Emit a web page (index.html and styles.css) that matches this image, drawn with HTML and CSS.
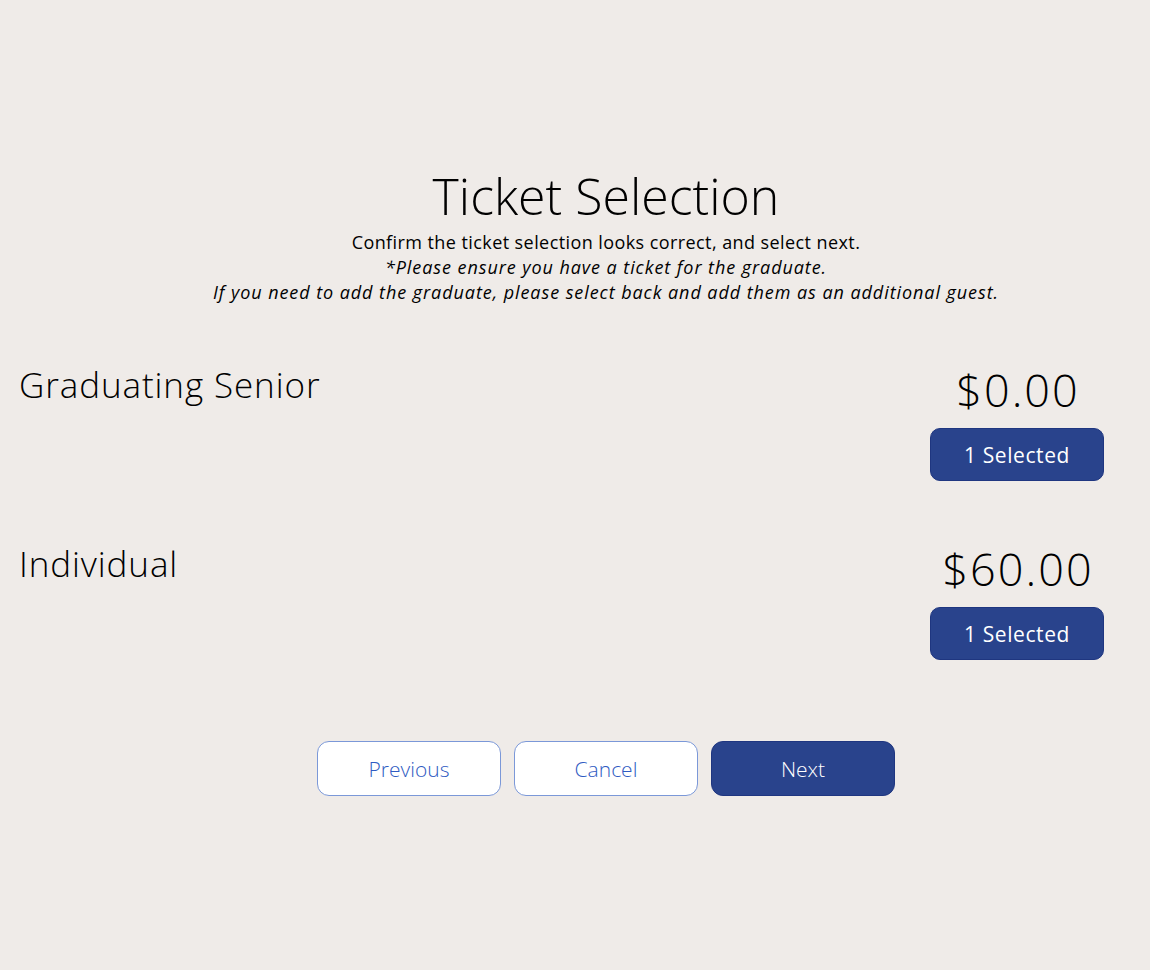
FILE: index.html
```html
<!DOCTYPE html>
<html lang="en">
<head>
<meta charset="utf-8">
<title>Ticket Selection</title>
<link rel="stylesheet" href="styles.css">
</head>
<body>
<main class="page">
  <header class="head">
    <h1 class="title">Ticket Selection</h1>
    <p class="sub">Confirm the ticket selection looks correct, and select next.</p>
    <p class="sub italic">*Please ensure you have a ticket for the graduate.</p>
    <p class="sub italic">If you need to add the graduate, please select back and add them as an additional guest.</p>
  </header>
  <section class="tickets">
    <div class="ticket">
      <div class="name">Graduating Senior</div>
      <div class="price-col">
        <div class="price">$0.00</div>
        <button class="sel">1 Selected</button>
      </div>
    </div>
    <div class="ticket">
      <div class="name">Individual</div>
      <div class="price-col">
        <div class="price">$60.00</div>
        <button class="sel">1 Selected</button>
      </div>
    </div>
  </section>
  <nav class="actions">
    <button class="btn outline">Previous</button>
    <button class="btn outline">Cancel</button>
    <button class="btn solid">Next</button>
  </nav>
</main>
</body>
</html>
```

FILE: styles.css
```css
html, body {
  margin: 0;
  padding: 0;
  background: #efebe8;
}
body {
  font-family: "Open Sans", Lato, sans-serif;
  color: #000;
  width: 1150px;
  height: 970px;
  overflow: hidden;
}
.page {
  padding-top: 162px;
}
.head {
  padding-left: 62px;
  text-align: center;
}
.title {
  margin: 0;
  font-size: 50px;
  font-weight: 300;
  line-height: 68px;
}
.sub {
  margin: 0;
  font-size: 18px;
  line-height: 25px;
  font-weight: 400;
  letter-spacing: 0.42px;
}
.italic {
  font-style: italic;
  letter-spacing: 0.93px;
}
.tickets {
  margin-top: 57px;
  padding-left: 19px;
  padding-right: 46px;
}
.ticket {
  display: flex;
  justify-content: space-between;
  align-items: flex-start;
  height: 179px;
}
.name {
  font-size: 35px;
  line-height: 46px;
  font-weight: 300;
  letter-spacing: 0.9px;
}
.price-col {
  width: 174px;
  display: flex;
  flex-direction: column;
  align-items: center;
}
.price {
  font-size: 45px;
  line-height: 56px;
  font-weight: 300;
  letter-spacing: 2px;
  padding-left: 2px;
}
.sel {
  margin-top: 10px;
  width: 174px;
  height: 53px;
  border-radius: 10px;
  border: 1px solid #1f3680;
  background: #29438c;
  color: #fff;
  font-family: inherit;
  font-size: 21px;
  font-weight: 400;
  letter-spacing: 0.6px;
}
.actions {
  margin-top: 21px;
  padding-left: 62px;
  display: flex;
  justify-content: center;
  gap: 13px;
}
.btn {
  width: 184px;
  height: 55px;
  border-radius: 12px;
  font-family: inherit;
  font-size: 21px;
}
.outline {
  background: #fff;
  border: 1px solid #7b98d8;
  color: #2f5bc2;
  font-weight: 300;
}
.solid {
  background: #29438c;
  border: 1px solid #1f3680;
  color: #fff;
  font-weight: 300;
}
```
